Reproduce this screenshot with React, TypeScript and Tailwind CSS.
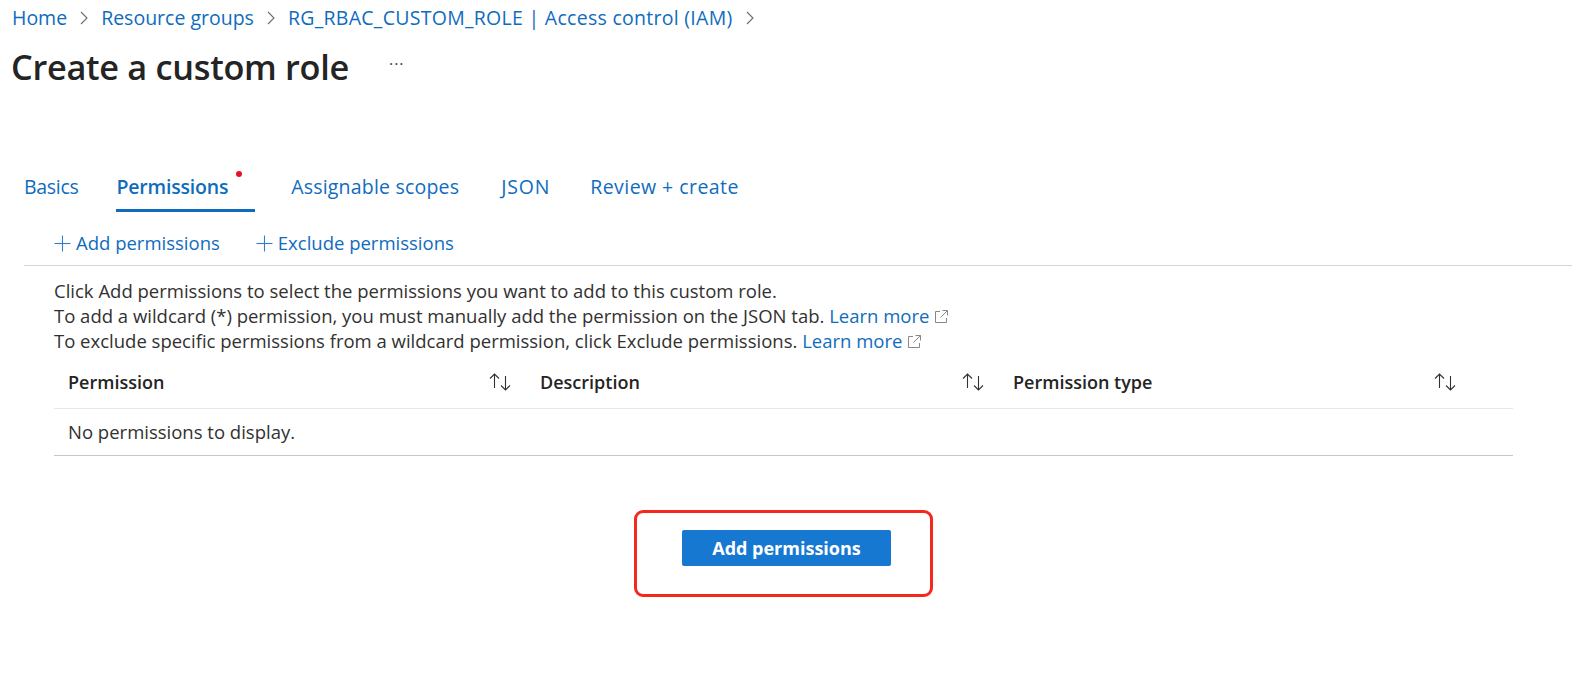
import React from "react";

const Chevron = () => (
  <svg width="10" height="16" viewBox="0 0 10 16" className="mx-[12px]">
    <polyline points="2,2 8,8 2,14" fill="none" stroke="#6b6b6b" strokeWidth="1.1" />
  </svg>
);

const PlusIcon = () => (
  <svg width="17" height="17" viewBox="0 0 17 17" className="mr-[5px]">
    <line x1="8.5" y1="0.5" x2="8.5" y2="16.5" stroke="#2f7fd0" strokeWidth="1.1" />
    <line x1="0.5" y1="8.5" x2="16.5" y2="8.5" stroke="#2f7fd0" strokeWidth="1.1" />
  </svg>
);

const SortIcon = () => (
  <svg width="26" height="22" viewBox="0 0 26 22">
    <line x1="6.5" y1="3" x2="6.5" y2="17" stroke="#323130" strokeWidth="1.1" />
    <polyline points="2,7.5 6.5,3 11,7.5" fill="none" stroke="#323130" strokeWidth="1.1" />
    <line x1="17.5" y1="5" x2="17.5" y2="19" stroke="#323130" strokeWidth="1.1" />
    <polyline points="13,14.5 17.5,19 22,14.5" fill="none" stroke="#323130" strokeWidth="1.1" />
  </svg>
);

const ExtIcon = () => (
  <svg width="15" height="15" viewBox="0 0 15 15" className="ml-[5px] inline-block align-[-1px]">
    <path d="M6 2.5 H1.5 V13.5 H12.5 V9" fill="none" stroke="#8a8886" strokeWidth="1" />
    <path d="M8.5 1.5 H13.5 V6.5" fill="none" stroke="#8a8886" strokeWidth="1" />
    <line x1="13.5" y1="1.5" x2="6.5" y2="8.5" stroke="#8a8886" strokeWidth="1" />
  </svg>
);

export default function App() {
  const font = { fontFamily: "'Open Sans', 'Noto Sans', Arial, sans-serif" };
  return (
    <div className="w-[1572px] h-[686px] bg-white overflow-hidden text-[#323130]" style={font}>
      {/* Breadcrumb */}
      <div className="flex items-center pl-[12px] h-[36px] text-[19.5px] text-[#0f6cbd]">
        <span>Home</span>
        <Chevron />
        <span>Resource groups</span>
        <Chevron />
        <span className="tracking-[0.28px]">RG_RBAC_CUSTOM_ROLE | Access control (IAM)</span>
        <Chevron />
      </div>

      {/* Title */}
      <div className="flex items-center pl-[11px] h-[62px]">
        <h1 className="text-[34.3px] font-semibold text-[#242424] tracking-[-0.3px]">Create a custom role</h1>
        <span className="ml-[40px] text-[16px] text-[#444] tracking-[1px] -mt-[6px]">···</span>
      </div>

      {/* Tabs */}
      <div className="flex items-end pl-[24px] mt-[66px] h-[48px] text-[19.5px] text-[#0f6cbd]">
        <div className="h-full flex items-center pb-[3px] tracking-[-0.3px]">Basics</div>
        <div className="relative h-full flex flex-col ml-[38px]">
          <div className="flex-1 flex items-center font-semibold pr-[27px] tracking-[-0.2px]">
            Permissions
            <span className="absolute right-[13px] top-[7px] w-[6px] h-[6px] rounded-full bg-[#e81123]" />
          </div>
          <div className="h-[3px] bg-[#0f6cbd]" />
        </div>
        <div className="h-full flex items-center pb-[3px] ml-[36px] tracking-[0.2px]">Assignable scopes</div>
        <div className="h-full flex items-center pb-[3px] ml-[42px] tracking-[0.8px]">JSON</div>
        <div className="h-full flex items-center pb-[3px] ml-[40px] tracking-[0.45px]">Review + create</div>
      </div>

      {/* Toolbar */}
      <div className="flex items-center pl-[54px] h-[53px] pt-[9px] text-[18.5px] text-[#0f6cbd]">
        <div className="flex items-center">
          <PlusIcon />
          <span>Add permissions</span>
        </div>
        <div className="flex items-center ml-[36px]">
          <PlusIcon />
          <span>Exclude permissions</span>
        </div>
      </div>
      <div className="ml-[24px] border-t border-[#d6d6d6]" />

      {/* Content */}
      <div className="pl-[54px] pr-[59px] pt-[12px]">
        <div className="text-[18.5px] leading-[25px]">
          <div>Click Add permissions to select the permissions you want to add to this custom role.</div>
          <div>
            To add a wildcard (*) permission, you must manually add the permission on the JSON tab.{" "}
            <span className="text-[#0f6cbd]">Learn more</span>
            <ExtIcon />
          </div>
          <div>
            To exclude specific permissions from a wildcard permission, click Exclude permissions.{" "}
            <span className="text-[#0f6cbd]">Learn more</span>
            <ExtIcon />
          </div>
        </div>

        {/* Table */}
        <div className="mt-[3px]">
          <div className="grid grid-cols-[472px_473px_472px_1fr] h-[53px] border-b border-[#e8e8e8] text-[18px] font-semibold text-[#242424]">
            <div className="flex items-center justify-between pl-[14px] pr-[12px]">
              <span>Permission</span>
              <SortIcon />
            </div>
            <div className="flex items-center justify-between pl-[14px] pr-[12px]">
              <span>Description</span>
              <SortIcon />
            </div>
            <div className="flex items-center justify-between pl-[14px] pr-[12px]">
              <span>Permission type</span>
              <SortIcon />
            </div>
            <div />
          </div>
          <div className="h-[47px] flex items-center pl-[14px] border-b border-[#c8c8c8] text-[18.5px]">
            No permissions to display.
          </div>
        </div>
      </div>

      {/* Add permissions button with highlight */}
      <div className="flex justify-center mt-[54px] pr-[6px]">
        <div className="w-[299px] h-[87px] border-[3px] border-[#f5281e] rounded-[9px] flex items-start justify-center pt-[17px]">
          <button className="w-[209px] h-[36px] bg-[#1778d2] rounded-[2px] text-white font-bold text-[18px] ml-[7px]">
            Add permissions
          </button>
        </div>
      </div>
    </div>
  );
}
